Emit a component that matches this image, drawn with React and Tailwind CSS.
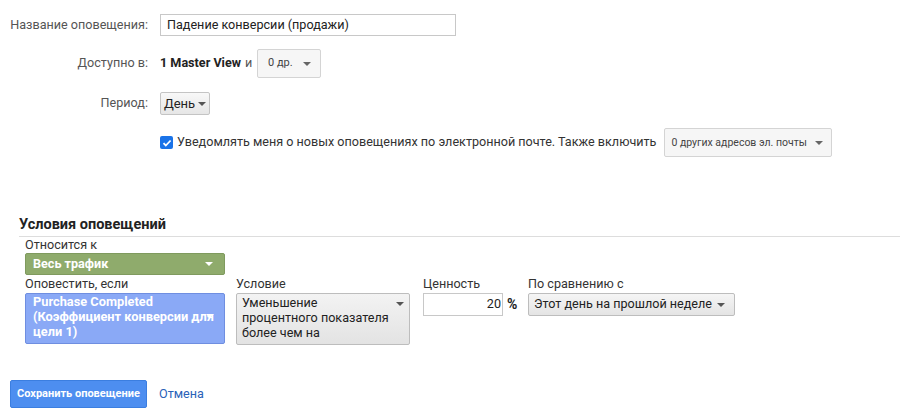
import React from 'react';

const Caret = ({ className = '' }) => (
    <svg width="8" height="4" viewBox="0 0 8 4" className={className}>
        <path d="M0 0h8L4 4z" fill="currentColor" />
    </svg>
);

function App() {
    return (
        <div className="w-[900px] h-[419px] bg-white text-[12.6px] text-[#222] overflow-hidden" style={{ fontFamily: 'Roboto, "Liberation Sans", sans-serif' }}>
            {/* Top form */}
            <div className="pt-[14px]">
                <div className="flex items-center h-[22px]">
                    <div className="w-[148px] text-right text-[#555]">Название оповещения:</div>
                    <div className="ml-[12px] w-[296px] h-[22px] border border-[#c8c8c8] px-[6px] flex items-center text-[#222]">
                        Падение конверсии (продажи)
                    </div>
                </div>

                <div className="flex items-center h-[29px] mt-[13px]">
                    <div className="w-[148px] text-right text-[#555]">Доступно в:</div>
                    <div className="ml-[12px] font-bold">1 Master View</div>
                    <div className="ml-[4px] text-[#555]">и</div>
                    <button className="ml-[5px] h-[29px] w-[64px] border border-[#d4d4d4] rounded-[2px] bg-[#f6f6f6] flex items-center justify-center gap-[10px] text-[11px] text-[#444]">
                        0 др. <Caret className="text-[#666]" />
                    </button>
                </div>

                <div className="flex items-center h-[23px] mt-[14px]">
                    <div className="w-[148px] text-right text-[#555]">Период:</div>
                    <button className="ml-[12px] h-[23px] w-[50px] border border-[#c4c4c4] rounded-[2px] bg-gradient-to-b from-[#f8f8f8] to-[#e6e6e6] flex items-center justify-center gap-[3px] text-[13px] text-[#222]">
                        День <Caret className="text-[#555]" />
                    </button>
                </div>

                <div className="flex items-center h-[29px] mt-[13px] pl-[160px]">
                    <span className="w-[13px] h-[13px] rounded-[2px] bg-[#1a73e8] flex items-center justify-center">
                        <svg width="10" height="10" viewBox="0 0 10 10">
                            <path d="M1.5 5.2l2.3 2.3L8.6 2.5" stroke="white" strokeWidth="1.8" fill="none" />
                        </svg>
                    </span>
                    <span className="ml-[4px] text-[#333]">Уведомлять меня о новых оповещениях по электронной почте. Также включить</span>
                    <button className="ml-[8px] h-[29px] w-[168px] border border-[#d4d4d4] rounded-[2px] bg-[#f6f6f6] flex items-center justify-between px-[6px] text-[10.5px] text-[#444]">
                        0 других адресов эл. почты <Caret className="text-[#666] mr-[2px]" />
                    </button>
                </div>
            </div>

            {/* Conditions */}
            <div className="mt-[59px] pl-[19px]">
                <div className="text-[14.5px] font-bold text-[#222] leading-[18px]">Условия оповещений</div>
                <div className="mt-[2px] h-px bg-[#ddd]" />
                <div className="pl-[6px]">
                    <div className="leading-[16px] text-[#333]">Относится к</div>
                    <div className="w-[200px] h-[22px] bg-[#8fab6c] border border-[#7f9a5e] rounded-[2px] flex items-center justify-between px-[7px] text-white font-bold">
                        Весь трафик <Caret className="mr-[4px]" />
                    </div>
                    <div className="flex mt-[1px]">
                        <div className="w-[211px]">
                            <div className="leading-[16px] text-[#333]">Оповестить, если</div>
                            <div className="mt-[1px] w-[200px] h-[51px] bg-[#8aa9f6] border border-[#6f8ee0] rounded-[2px] relative px-[7px] text-white font-bold leading-[15px] text-[12.8px]">
                                Purchase Completed<br />(Коэффициент конверсии для<br />цели 1)
                                <Caret className="absolute right-[10px] top-[20px]" />
                            </div>
                        </div>
                        <div className="w-[187px]">
                            <div className="leading-[16px] text-[#333]">Условие</div>
                            <div className="mt-[1px] w-[174px] h-[52px] bg-gradient-to-b from-[#f3f3f3] to-[#e3e3e3] border border-[#bdbdbd] rounded-[2px] relative pl-[5px] pt-[1px] text-[#222] leading-[15px]">
                                Уменьшение<br />процентного показателя<br />более чем на
                                <Caret className="absolute right-[5px] top-[8px] text-[#555]" />
                            </div>
                        </div>
                        <div className="w-[105px]">
                            <div className="leading-[16px] text-[#333]">Ценность</div>
                            <div className="mt-[1px] flex items-center">
                                <div className="w-[80px] h-[23px] border border-[#c8c8c8] flex items-center justify-end pr-[1px]">20</div>
                                <span className="ml-[4px] font-bold text-[14px]">%</span>
                            </div>
                        </div>
                        <div>
                            <div className="leading-[16px] text-[#333]">По сравнению с</div>
                            <div className="mt-[1px] w-[207px] h-[23px] bg-gradient-to-b from-[#f5f5f5] to-[#e4e4e4] border border-[#bdbdbd] rounded-[2px] flex items-center justify-between px-[5px] text-[#222]">
                                Этот день на прошлой неделе <Caret className="text-[#555] mr-[4px]" />
                            </div>
                        </div>
                    </div>
                </div>
            </div>

            {/* Actions */}
            <div className="flex items-center mt-[35px] pl-[10px]">
                <button className="h-[28px] w-[137px] bg-[#4d8ef0] border border-[#3b7ee0] rounded-[2px] text-white font-bold text-[11px]">
                    Сохранить оповещение
                </button>
                <span className="ml-[12px] text-[#2a62b8]">Отмена</span>
            </div>
        </div>
    );
}

export default App;
